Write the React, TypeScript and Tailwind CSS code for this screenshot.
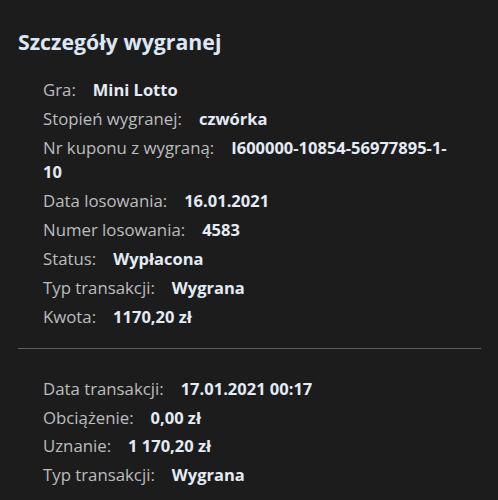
import React from "react";

const Row = ({ label, value }: { label: string; value: string }) => (
  <p className="text-[16.8px] leading-[24px]">
    <span className="text-[#bdbdbd]">{label}</span>
    <span className="ml-[17px] text-[16.5px] leading-[23px] font-bold text-[#e3ebf5]">{value}</span>
  </p>
);

export default function App() {
  const first = [
    ["Gra:", "Mini Lotto"],
    ["Stopień wygranej:", "czwórka"],
    ["Nr kuponu z wygraną:", "I600000-10854-56977895-1-10"],
    ["Data losowania:", "16.01.2021"],
    ["Numer losowania:", "4583"],
    ["Status:", "Wypłacona"],
    ["Typ transakcji:", "Wygrana"],
    ["Kwota:", "1170,20 zł"],
  ];
  const second = [
    ["Data transakcji:", "17.01.2021 00:17"],
    ["Obciążenie:", "0,00 zł"],
    ["Uznanie:", "1 170,20 zł"],
    ["Typ transakcji:", "Wygrana"],
  ];
  return (
    <div
      className="w-[498px] h-[500px] overflow-hidden bg-[#1c1c1d] pl-[18px] pr-[17px] pt-[28px]"
      style={{ fontFamily: '"Open Sans", "Noto Sans", sans-serif' }}
    >
      <h1 className="text-[21.3px] leading-[28px] font-bold text-[#dde7f3]">
        Szczegóły wygranej
      </h1>
      <div className="mt-[22px] pl-[25px] pr-[25px] flex flex-col gap-[5px]">
        {first.map(([l, v]) => (
          <Row key={l} label={l} value={v} />
        ))}
      </div>
      <div className="mt-[19px] h-px bg-[#5e5e5e]" />
      <div className="mt-[28px] pl-[25px] pr-[25px] flex flex-col gap-[4.7px]">
        {second.map(([l, v]) => (
          <Row key={l} label={l} value={v} />
        ))}
      </div>
    </div>
  );
}
